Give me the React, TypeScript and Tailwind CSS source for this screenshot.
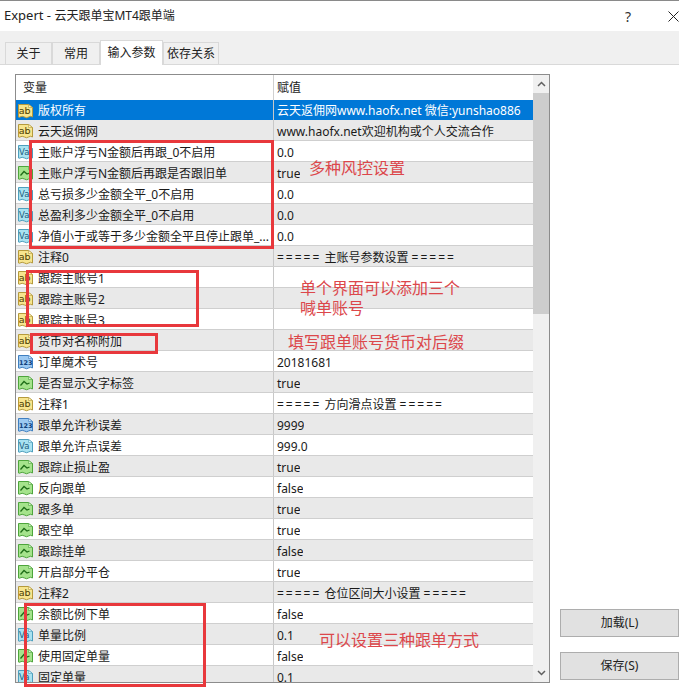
import React from "react";

type Kind = "ab" | "va" | "bool" | "num";
const rows: [Kind, string, string][] = [
  ["ab", "版权所有", "云天返佣网www.haofx.net 微信:yunshao886"],
  ["ab", "云天返佣网", "www.haofx.net欢迎机构或个人交流合作"],
  ["va", "主账户浮亏N金额后再跟_0不启用", "0.0"],
  ["bool", "主账户浮亏N金额后再跟是否跟旧单", "true"],
  ["va", "总亏损多少金额全平_0不启用", "0.0"],
  ["va", "总盈利多少金额全平_0不启用", "0.0"],
  ["va", "净值小于或等于多少金额全平且停止跟单_...", "0.0"],
  ["ab", "注释0", "===== 主账号参数设置 ====="],
  ["ab", "跟踪主账号1", ""],
  ["ab", "跟踪主账号2", ""],
  ["ab", "跟踪主账号3", ""],
  ["ab", "货币对名称附加", ""],
  ["num", "订单魔术号", "20181681"],
  ["bool", "是否显示文字标签", "true"],
  ["ab", "注释1", "===== 方向滑点设置 ====="],
  ["num", "跟单允许秒误差", "9999"],
  ["va", "跟单允许点误差", "999.0"],
  ["bool", "跟踪止损止盈", "true"],
  ["bool", "反向跟单", "false"],
  ["bool", "跟多单", "true"],
  ["bool", "跟空单", "true"],
  ["bool", "跟踪挂单", "false"],
  ["bool", "开启部分平仓", "true"],
  ["ab", "注释2", "===== 仓位区间大小设置 ====="],
  ["bool", "余额比例下单", "false"],
  ["va", "单量比例", "0.1"],
  ["bool", "使用固定单量", "false"],
  ["va", "固定单量", "0.1"],
];

const palette: Record<Kind, { fill: string; stroke: string; fold: string }> = {
  ab: { fill: "#f7e58e", stroke: "#b59a3c", fold: "#fff6c4" },
  va: { fill: "#a9e2f0", stroke: "#4d9fbe", fold: "#dcf5fb" },
  bool: { fill: "#a5e38c", stroke: "#4ea53c", fold: "#d8f6ca" },
  num: { fill: "#9cc9f2", stroke: "#3f7fc0", fold: "#d5e9fb" },
};

function Icon({ kind }: { kind: Kind }) {
  const c = palette[kind];
  return (
    <svg width="17" height="17" viewBox="0 0 17 17" className="shrink-0 mt-[1px]">
      <path
        d="M1.5 2.5 H11.5 L15.5 5.5 V15 Q13.5 13.5 11.5 15 Q9.5 16.5 7.5 15 Q5 13.5 3 15 Q2 15.5 1.5 15 Z"
        fill={c.fill}
        stroke={c.stroke}
      />
      <path d="M11.5 2.5 V5.5 H15.5 Z" fill={c.fold} stroke={c.stroke} strokeWidth="0.6" />
      {kind === "ab" && (
        <text x="1.8" y="12" fontSize="9.5" fontFamily="'DejaVu Sans', sans-serif" fill="#4a3a00">
          ab
        </text>
      )}
      {kind === "va" && (
        <text x="2" y="12" fontSize="8.5" fontFamily="'DejaVu Sans', sans-serif" fill="#1d5f80">
          Va
        </text>
      )}
      {kind === "num" && (
        <text x="2" y="11.5" fontSize="6.5" fontWeight="700" fontFamily="'DejaVu Sans', sans-serif" fill="#0f3f7c">
          123
        </text>
      )}
      {kind === "bool" && <path d="M3.5 11.5 L7 7.5 L10 10 L12.5 9" fill="none" stroke="#1f6d18" strokeWidth="1.3" />}
    </svg>
  );
}

function Tab({ label, active, width }: { label: string; active?: boolean; width: string }) {
  return (
    <div
      className={
        active
          ? `${width} h-[25px] -mb-px z-10 flex items-center justify-center bg-white border border-b-0 border-[#d9d9d9] text-[12px] text-[#222]`
          : `${width} h-[22px] flex items-center justify-center bg-[#f0f0f0] border border-b-0 border-[#d9d9d9] text-[12px] text-[#222]`
      }
    >
      {label}
    </div>
  );
}

function Value({ value }: { value: string }) {
  if (!value.startsWith("=====")) return <>{value}</>;
  const middle = value.slice(5, -5);
  return (
    <>
      <span className="tracking-[2px]">=====</span>
      {middle}
      <span className="tracking-[2px]">=====</span>
    </>
  );
}

function Row({ kind, name, value, index }: { kind: Kind; name: string; value: string; index: number }) {
  const selected = index === 0;
  const bg = selected ? "bg-[#0078d7] text-white" : index % 2 === 1 ? "bg-[#e9e9e9] text-[#1a1a1a]" : "bg-white text-[#1a1a1a]";
  const h = selected ? "h-[20px]" : "h-[21px] border-b border-[#cfcfcf]";
  const pad = selected ? "pt-[2px]" : "pt-[3px]";
  return (
    <div className={`flex shrink-0 items-center ${bg} ${h}`}>
      <div className="w-[258px] h-full shrink-0 flex items-center pl-[1px] border-r border-[#c8c8c8] overflow-hidden">
        <Icon kind={kind} />
        <span className={`ml-[4px] ${pad} whitespace-nowrap`}>{name}</span>
      </div>
      <div className={`pl-[3px] ${pad} whitespace-nowrap overflow-hidden`}>
        <Value value={value} />
      </div>
    </div>
  );
}

function Note({ className, children }: { className: string; children: React.ReactNode }) {
  return (
    <div className={`absolute text-[16px] leading-[20px] text-[#dc474b] whitespace-nowrap ${className}`}>{children}</div>
  );
}

function Box({ className }: { className: string }) {
  return <div className={`absolute border-[3px] border-[#e8383c] ${className}`} />;
}

export default function App() {
  return (
    <div
      className="relative w-[679px] h-[688px] overflow-hidden bg-white flex flex-col text-[12px]"
      style={{ fontFamily: "'Noto Sans','Noto Sans CJK SC',sans-serif" }}
    >
      <div className="h-[31px] shrink-0 border-t border-[#8a8a8a] flex items-center pl-[4px] text-[#222]">
        <span className="text-[13px] whitespace-pre">Expert - </span>
        <span className="text-[12px]">云天跟单宝MT4跟单端</span>
        <span className="ml-auto mr-[37px] text-[14px] text-[#333]">?</span>
        <svg width="11" height="11" viewBox="0 0 11 11">
          <path d="M0.5 0.5 L10.5 10.5 M10.5 0.5 L0.5 10.5" stroke="#222" strokeWidth="1" fill="none" />
        </svg>
      </div>

      <div className="h-[34px] shrink-0 bg-[#f0f0f0] border-b border-[#d9d9d9] flex items-end pl-[5px]">
        <Tab label="关于" width="w-[47px]" />
        <Tab label="常用" width="w-[48px]" />
        <Tab label="输入参数" active width="w-[63px]" />
        <Tab label="依存关系" width="w-[56px]" />
      </div>

      <div className="flex-1 min-h-0 flex pt-[9px] pl-[15px] pb-[5px]">
        <div className="w-[535px] shrink-0 border border-[#8c8c8c] flex bg-white overflow-hidden">
          <div className="flex-1 min-w-0 flex flex-col overflow-hidden">
            <div className="h-[25px] shrink-0 flex items-center bg-white text-[#222]">
              <div className="w-[258px] h-full shrink-0 flex items-center pl-[7px] border-r border-[#d0d0d0]">变量</div>
              <div className="pl-[3px]">赋值</div>
            </div>
            {rows.map((r, i) => (
              <Row key={i} kind={r[0]} name={r[1]} value={r[2]} index={i} />
            ))}
          </div>
          <div className="w-[16px] shrink-0 bg-[#f0f0f0] flex flex-col items-center">
            <div className="h-[18px] flex items-center justify-center">
              <svg width="9" height="6" viewBox="0 0 9 6">
                <path d="M1 5 L4.5 1.5 L8 5" fill="none" stroke="#606060" strokeWidth="1.5" />
              </svg>
            </div>
            <div className="w-full h-[221px] bg-[#cdcdcd]" />
            <div className="mt-auto h-[18px] flex items-center justify-center">
              <svg width="9" height="6" viewBox="0 0 9 6">
                <path d="M1 1 L4.5 4.5 L8 1" fill="none" stroke="#606060" strokeWidth="1.5" />
              </svg>
            </div>
          </div>
        </div>

        <div className="ml-[10px] flex-1 flex flex-col justify-end gap-[15px] pb-[3px] text-[#222]">
          <div className="h-[28px] bg-[#e1e1e1] border border-[#adadad] flex items-center justify-center">加载(L)</div>
          <div className="h-[28px] bg-[#e1e1e1] border border-[#adadad] flex items-center justify-center">保存(S)</div>
        </div>
      </div>

      <Box className="left-[29px] top-[140px] w-[245px] h-[109px]" />
      <Box className="left-[26px] top-[270px] w-[173px] h-[57px]" />
      <Box className="left-[30px] top-[333px] w-[128px] h-[21px]" />
      <Box className="left-[24px] top-[603px] w-[182px] h-[84px]" />

      <Note className="left-[309px] top-[158px]">多种风控设置</Note>
      <Note className="left-[300px] top-[278px]">单个界面可以添加三个</Note>
      <Note className="left-[300px] top-[298px]">喊单账号</Note>
      <Note className="left-[288px] top-[332px]">填写跟单账号货币对后缀</Note>
      <Note className="left-[319px] top-[630px]">可以设置三种跟单方式</Note>
    </div>
  );
}
